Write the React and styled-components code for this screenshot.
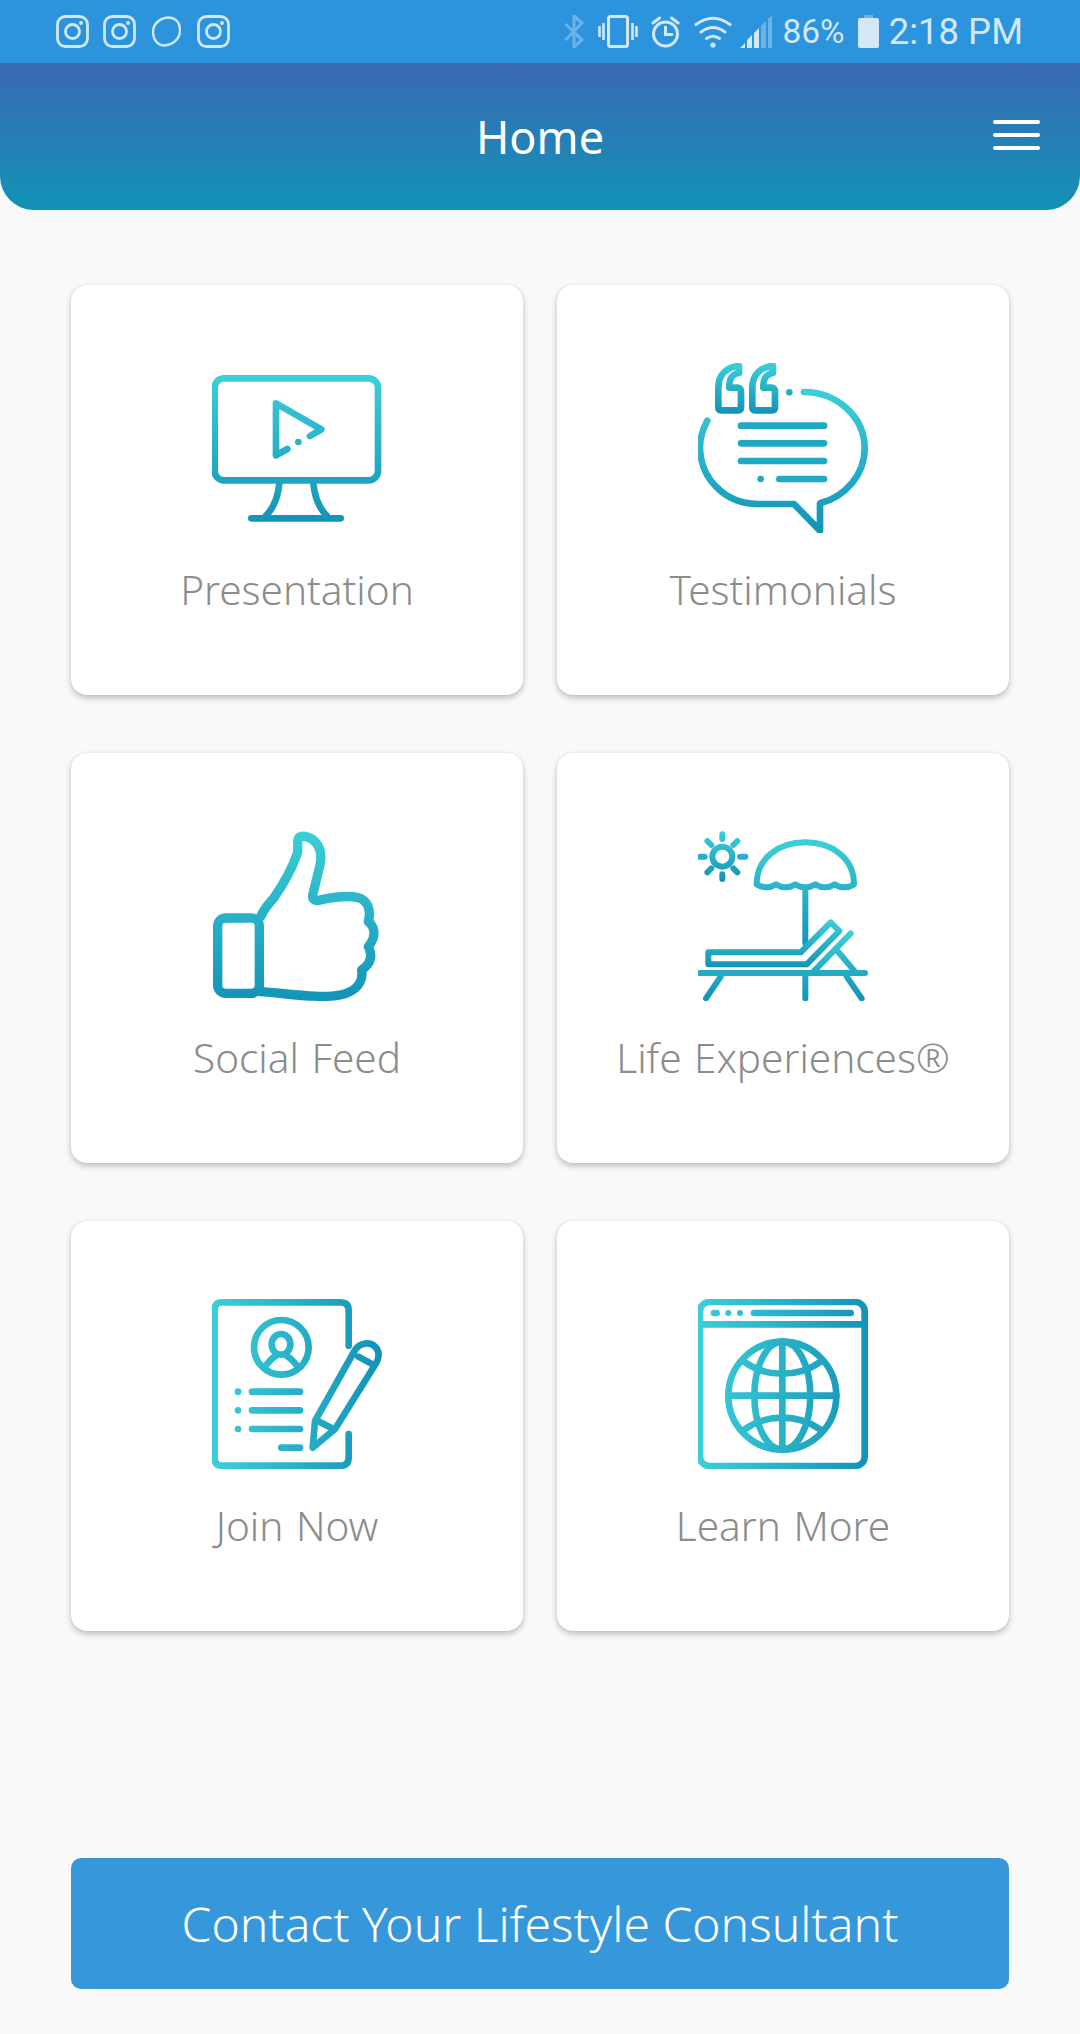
import React from 'react';
import styled, { createGlobalStyle } from 'styled-components';

const GlobalStyle = createGlobalStyle`
    html, body {
        margin: 0;
        padding: 0;
        background: #f9f9f9;
    }
    * {
        box-sizing: border-box;
    }
`;

const Page = styled.div`
    width: 1080px;
    height: 2034px;
    background: #f9f9f9;
    font-family: "Noto Sans", "Open Sans", sans-serif;
    font-weight: 300;
    overflow: hidden;
`;

const StatusBar = styled.div`
    height: 63px;
    background: #2c93dd;
    color: #d2e8f9;
    display: flex;
    align-items: center;
    justify-content: space-between;
    padding: 0 57px 0 56px;
`;

const StatusGroup = styled.div`
    display: flex;
    align-items: center;
`;

const StatusIcon = styled.svg`
    display: block;
    flex: none;
    margin-right: ${p => p.$right || 0}px;
`;

const StatusText = styled.span`
    font-family: Roboto, sans-serif;
    font-weight: 400;
    font-size: ${p => p.$size}px;
    line-height: 40px;
    margin-right: ${p => p.$right || 0}px;
    white-space: nowrap;
`;

const Header = styled.header`
    height: 147px;
    background: linear-gradient(180deg, #3a69b4 0%, #1293b6 100%);
    border-radius: 0 0 34px 34px;
    display: grid;
    grid-template-columns: 1fr auto 1fr;
    align-items: center;
    padding: 0 40px;
`;

const Title = styled.h1`
    grid-column: 2;
    margin: 0;
    color: #fff;
    font-size: 45px;
    font-weight: 400;
    line-height: 60px;
`;

const MenuButton = styled.div`
    grid-column: 3;
    justify-self: end;
    width: 47px;
    display: flex;
    flex-direction: column;
    gap: 9px;
    margin-top: -3px;
`;

const MenuBar = styled.span`
    display: block;
    height: 4px;
    border-radius: 2px;
    background: #fff;
`;

const Grid = styled.main`
    display: grid;
    grid-template-columns: repeat(2, 452px);
    grid-auto-rows: 410px;
    column-gap: 34px;
    row-gap: 58px;
    padding: 75px 71px 0;
`;

const Card = styled.div`
    background: #fff;
    border-radius: 16px;
    box-shadow: 0 3px 6px rgba(0, 0, 0, 0.24), 0 0 2px rgba(0, 0, 0, 0.08);
    padding-top: 78px;
    display: flex;
    flex-direction: column;
    align-items: center;
`;

const IconSvg = styled.svg`
    display: block;
    width: 170px;
    height: 170px;
    fill: none;
    stroke-linecap: round;
    stroke-linejoin: round;
`;

const Label = styled.div`
    margin-top: 32px;
    color: #8c8c8c;
    font-size: 40.5px;
    word-spacing: 2px;
    line-height: 50px;
    white-space: nowrap;
`;

const ContactButton = styled.div`
    height: 131px;
    margin: 227px 71px 0;
    border-radius: 10px;
    background: #3797db;
    color: #fff;
    font-size: 48px;
    display: flex;
    align-items: center;
    justify-content: center;
`;

const LIGHT = '#3ccfd9';
const DARK = '#1393b7';

const Grad = ({ id, x1 = 0, y1 = 0, x2 = 0, y2 = 0 }) => (
    <linearGradient id={id} gradientUnits="userSpaceOnUse" x1={x1} y1={y1} x2={x2} y2={y2}>
        <stop offset="0" stopColor={LIGHT} />
        <stop offset="1" stopColor={DARK} />
    </linearGradient>
);

const Monitor = () => (
    <IconSvg viewBox="96 39 510 510" strokeWidth="20">
        <defs><Grad id="mon" y1={75} y2={515} /></defs>
        <g stroke="url(#mon)">
            <rect x="104" y="85" width="490" height="306" rx="28" />
            <path d="M298 400C294 440 280 475 258 497M400 400C404 440 418 475 440 497M214 505H482" />
            <path d="M322 297L288 316V160L424 238L390 258" />
        </g>
        <circle cx="355" cy="276" r="10" fill="url(#mon)" />
    </IconSvg>
);

const Quote = () => (
    <IconSvg viewBox="84 39 510 510" strokeWidth="20">
        <defs>
            <Grad id="qb" y1={118} y2={550} />
            <Grad id="qm" y1={40} y2={190} />
        </defs>
        <g stroke="url(#qm)">
            <path d="M207 48C170 50 145 75 145 112V172Q145 181 154 181H204Q213 181 213 172V125Q213 114 202 113H178C176 90 186 72 207 68Z" />
            <path d="M309 48C272 50 247 75 247 112V172Q247 181 256 181H306Q315 181 315 172V125Q315 114 304 113H280C278 90 288 72 309 68Z" />
        </g>
        <circle cx="358" cy="127" r="10" fill="url(#qm)" />
        <path stroke="url(#qb)" d="M402 126C500 126 584 200 584 295C584 375 525 440 450 460V542L372 462H262C165 462 90 385 90 290C90 262 98 238 112 212" />
        <path stroke="#1fa9c4" d="M213 227H462M213 280H462M213 333H462M328 387H462" />
        <circle cx="272" cy="387" r="10" fill="#1fa9c4" />
    </IconSvg>
);

const Thumb = () => (
    <IconSvg viewBox="66 48 510 510" strokeWidth="28">
        <defs><Grad id="thb" y1={45} y2={560} /></defs>
        <g stroke="url(#thb)">
            <rect x="83" y="309" width="125" height="226" rx="24" />
            <path d="M212 305C222 280 240 262 252 248C275 215 305 165 322 115C326 100 320 80 325 70C335 58 360 65 375 80C395 100 395 125 390 150L368 240C366 252 372 258 385 256C420 248 470 240 505 248C530 255 545 280 535 320C555 335 560 365 535 395C548 420 545 445 515 465C520 500 500 530 450 540C390 552 290 535 210 530" />
        </g>
    </IconSvg>
);

const Lounger = () => (
    <IconSvg viewBox="54 48 510 510" strokeWidth="18">
        <defs>
            <Grad id="lgs" y1={50} y2={200} />
            <Grad id="lgu" y1={75} y2={400} />
            <Grad id="lgb" y1={315} y2={455} />
            <Grad id="lgf" y1={350} y2={555} />
        </defs>
        <g stroke="url(#lgs)">
            <circle cx="127" cy="125" r="30" />
            <path d="M127 58V72M127 178V192M60 125H74M180 125H196M82 78L94 90M172 78L160 90M82 172L94 160M172 172L160 160" strokeWidth="18" />
        </g>
        <path stroke="url(#lgu)" d="M230 208C230 130 295 82 376 82C457 82 522 130 522 208q-29 18 -58 0q-29 18 -58 0q-30 18 -60 0q-29 18 -58 0q-29 18 -58 0M376 220V385" />
        <path stroke="url(#lgb)" d="M85 412H362L452 322L478 348L380 448H85Z" />
        <path stroke="url(#lgf)" d="M512 355L398 472M470 405L525 470M60 474H555M122 485L78 550M376 480V550M500 485L545 550" />
    </IconSvg>
);

const Resume = () => (
    <IconSvg viewBox="66 42 510 510" strokeWidth="20">
        <defs><Grad id="res" x1={66} x2={570} /></defs>
        <g stroke="url(#res)">
            <path d="M476 182V75Q476 52 450 52H96Q74 52 74 75V518Q74 542 96 542H450Q476 542 476 518V447" />
            <circle cx="274" cy="187" r="82" />
            <ellipse cx="273" cy="178" rx="28" ry="31" />
            <path d="M226 244Q242 222 258 212M322 244Q306 222 289 212" />
            <path d="M186 320H330M186 376H330M186 432H330M274 488H330" />
            <path d="M368 488L375 408L495 195C510 172 540 170 555 185C570 200 568 215 560 232L435 432Z" />
            <path d="M505 215L548 238M378 405L430 432" />
        </g>
        {[320, 376, 432].map(y => <circle key={y} cx="144" cy={y} r="10" fill="url(#res)" />)}
    </IconSvg>
);

const Globe = () => (
    <IconSvg viewBox="54 42 510 510" strokeWidth="20">
        <defs><Grad id="glo" x1={50} x2={565} /></defs>
        <g stroke="url(#glo)">
            <rect x="60" y="51" width="494" height="492" rx="28" />
            <path d="M60 118H554M102 84H110M222 84H512" />
            <circle cx="307" cy="332" r="162" />
            <ellipse cx="307" cy="332" rx="84" ry="162" />
            <path d="M307 170V494M145 332H469" />
            <path d="M192 230C260 278 354 278 422 230M192 434C260 386 354 386 422 434" />
        </g>
        <circle cx="145" cy="84" r="9" fill="url(#glo)" />
        <circle cx="180" cy="84" r="9" fill="url(#glo)" />
    </IconSvg>
);

const Instagram = ({ right }) => (
    <StatusIcon $right={right} width="33" height="33" viewBox="0 0 33 33" fill="none" stroke="#d2e8f9" strokeWidth="2.8">
        <rect x="1.5" y="1.5" width="30" height="30" rx="8" />
        <circle cx="16.5" cy="16.5" r="7" />
        <circle cx="25" cy="8" r="2" fill="#d2e8f9" stroke="none" />
    </StatusIcon>
);

const items = [
    { name: 'Presentation', Icon: Monitor },
    { name: 'Testimonials', Icon: Quote },
    { name: 'Social Feed', Icon: Thumb },
    { name: 'Life Experiences®', Icon: Lounger },
    { name: 'Join Now', Icon: Resume },
    { name: 'Learn More', Icon: Globe },
];

export default function App() {
    return (
        <Page>
            <GlobalStyle />
            <StatusBar>
                <StatusGroup>
                    <Instagram right={14} />
                    <Instagram right={16} />
                    <StatusIcon $right={16} width="29" height="33" viewBox="0 0 29 33" fill="none" stroke="#d2e8f9" strokeWidth="2.4">
                        <path d="M17 2.5C24 3 28 8 28 15C28 24 21 30 12 30.5C5 30 1 24 1 17C1 9 8 2.5 17 2.5Z" />
                    </StatusIcon>
                    <Instagram />
                </StatusGroup>
                <StatusGroup>
                    <StatusIcon $right={14} width="20" height="33" viewBox="0 0 20 33" fill="none" stroke="#6cb4e8" strokeWidth="3">
                        <path d="M1.5 9L18 25L10 32V1L18 8L1.5 25" />
                    </StatusIcon>
                    <StatusIcon $right={13} width="40" height="33" viewBox="0 0 40 33" fill="none" stroke="#d2e8f9" strokeWidth="2.6">
                        <rect x="10.5" y="1.5" width="19" height="30" rx="2" strokeWidth="3" />
                        <path d="M1.5 11V22M5.5 8V25M34.5 8V25M38.5 11V22" />
                    </StatusIcon>
                    <StatusIcon $right={14} width="29" height="33" viewBox="0 0 29 33" fill="none" stroke="#d2e8f9" strokeWidth="3" strokeLinecap="round">
                        <circle cx="14.5" cy="19" r="12" />
                        <path d="M14.5 12V19.5H21M2 8L8.5 3M27 8L20.5 3" />
                    </StatusIcon>
                    <StatusIcon $right={8} width="38" height="33" viewBox="0 0 38 33" fill="none" stroke="#d2e8f9" strokeWidth="3" strokeLinecap="round">
                        <path d="M2 9.5Q19 -3 36 9.5M7 17Q19 8 31 17M12.5 23.5Q19 19 25.5 23.5" />
                        <circle cx="19" cy="30" r="2.6" fill="#d2e8f9" stroke="none" />
                    </StatusIcon>
                    <StatusIcon $right={10} width="32" height="33" viewBox="0 0 32 33">
                        <path fill="#d2e8f9" d="M0 33L5 28V33ZM7 33V25L12 20V33ZM14 33V18L19 13V33Z" />
                        <path fill="#6cb4e8" d="M21 33V11L26 6V33ZM28 33V4L32 0V33Z" />
                    </StatusIcon>
                    <StatusText $size={33.5} $right={13}>86%</StatusText>
                    <StatusIcon $right={10} width="21" height="33" viewBox="0 0 21 33">
                        <path fill="#6cb4e8" d="M6 0H15V3H6Z" />
                        <rect fill="#d2e8f9" x="0" y="3" width="21" height="30" rx="2" />
                    </StatusIcon>
                    <StatusText $size={36.5}>2:18 PM</StatusText>
                </StatusGroup>
            </StatusBar>

            <Header>
                <Title>Home</Title>
                <MenuButton>
                    <MenuBar />
                    <MenuBar />
                    <MenuBar />
                </MenuButton>
            </Header>

            <Grid>
                {items.map(({ name, Icon }) => (
                    <Card key={name}>
                        <Icon />
                        <Label>{name}</Label>
                    </Card>
                ))}
            </Grid>

            <ContactButton>Contact Your Lifestyle Consultant</ContactButton>
        </Page>
    );
}
